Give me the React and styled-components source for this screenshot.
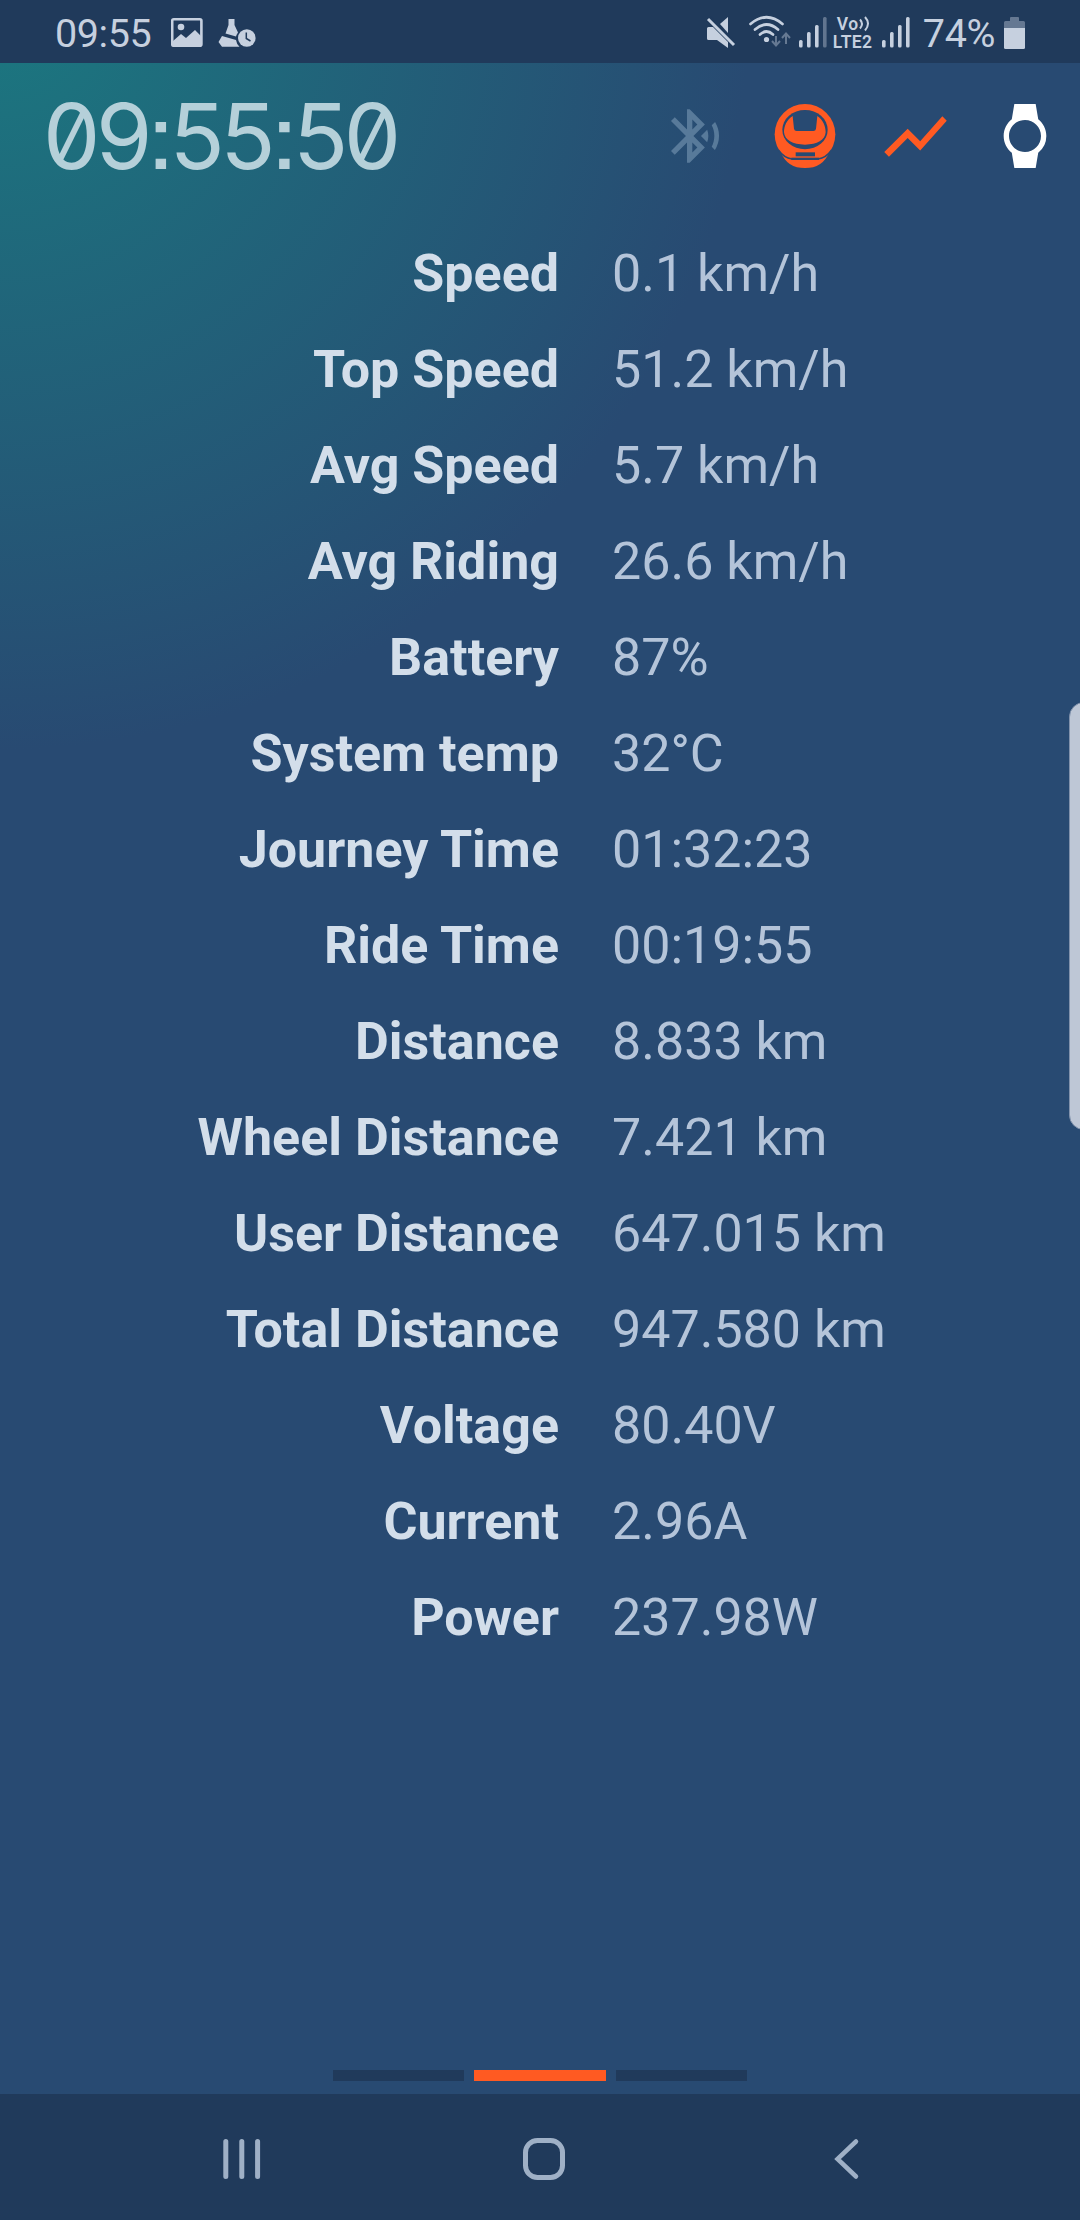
import React from "react";
import styled, { createGlobalStyle } from "styled-components";
import { MdBluetoothAudio, MdShowChart, MdWatch } from "react-icons/md";

const GlobalStyle = createGlobalStyle`
  * {
    box-sizing: border-box;
  }
  body {
    margin: 0;
    background: #284a72;
  }
`;

const Screen = styled.div`
  position: relative;
  display: flex;
  flex-direction: column;
  width: 1080px;
  height: 2220px;
  overflow: hidden;
  font-family: Roboto, sans-serif;
  background: radial-gradient(circle 750px at 0 0, #1b7880 0%, #284a72 100%);
  background-color: #284a72;
`;

const StatusBar = styled.div`
  display: flex;
  justify-content: space-between;
  height: 63px;
  padding: 0 55px;
  background: #203a5b;
  color: #c6d0df;
`;
const StatusGroup = styled.div`
  display: flex;
  align-items: center;
  height: 63px;
  svg {
    display: block;
    flex: none;
  }
`;
const StatusText = styled.span`
  font-size: 39.5px;
  letter-spacing: -0.4px;
  line-height: 40px;
  margin-top: 5px;
  margin-right: ${props => props.$gap}px;
`;
const StatusIcon = styled.svg`
  width: ${props => props.$w}px;
  height: 63px;
  margin-right: ${props => props.$gap || 0}px;
`;
const Volte = styled.div`
  width: 43px;
  margin-right: 6px;
  margin-top: 2px;
  font-size: 17.5px;
  font-weight: 600;
  line-height: 18px;
  letter-spacing: 0.4px;
  white-space: nowrap;
`;
const VolteTop = styled.div`
  display: flex;
  padding-left: 4px;
  height: 18px;
`;

const Header = styled.div`
  display: flex;
  align-items: center;
  height: 146px;
`;
const Clock = styled.div`
  flex: 1;
  padding-left: 43px;
  font-family: Inter, sans-serif;
  font-size: 91px;
  line-height: 100px;
  font-weight: 400;
  font-feature-settings: "zero" 1, "calt" 0, "ss07" 1;
  letter-spacing: -4.5px;
  white-space: nowrap;
  color: #b5d0d9;
`;
const HeaderIcon = styled.div`
  display: flex;
  align-items: center;
  justify-content: center;
  width: 110px;
  height: 110px;
  color: ${props => props.$color};
  svg {
    width: ${props => props.$size || 64}px;
    height: ${props => props.$size || 64}px;
    flex: none;
  }
`;

const Stats = styled.div`
  flex: 1;
  padding-top: 17px;
`;
const Row = styled.div`
  display: grid;
  grid-template-columns: 559px 1fr;
  column-gap: 53px;
  height: 96px;
  align-items: center;
  font-size: 52px;
  line-height: 60px;
`;
const Label = styled.div`
  text-align: right;
  font-weight: 700;
  color: #d3deea;
`;
const Value = styled.div`
  color: #b4c4d9;
`;

const Pager = styled.div`
  display: flex;
  justify-content: center;
  gap: 10px;
  height: 24px;
`;
const Page = styled.div`
  width: 131.5px;
  height: 11px;
  background: ${props => (props.$active ? "#ff5a22" : "#203a5b")};
`;

const NavBar = styled.div`
  display: grid;
  grid-template-columns: repeat(3, 302px);
  justify-items: center;
  align-items: center;
  height: 126px;
  padding: 4px 0 0 91px;
  background: #203a5b;
`;
const NavIcon = styled.svg`
  width: 42px;
  height: 42px;
  fill: none;
  stroke: #9fb0c6;
`;

const EdgeHandle = styled.div`
  position: absolute;
  top: 702px;
  right: -20px;
  width: 31px;
  height: 428px;
  border: 1px solid #8192ac;
  border-radius: 15px;
  background: #bec7d6;
`;

const Signal = ({ weak, gap }) => (
  <StatusIcon $w={28} $gap={gap} viewBox="0 0 28 63" fill="currentColor">
    <rect x="0" y="40" width="3.6" height="7.5" rx="1.5" />
    <rect x="8" y="32" width="3.6" height="15.5" rx="1.5" />
    <rect x="16" y="25" width="3.6" height="22.5" rx="1.5" />
    <rect
      x="24"
      y="17"
      width="3.6"
      height="30.5"
      rx="1.5"
      opacity={weak ? 0.4 : 1}
    />
  </StatusIcon>
);

const Wheel = () => (
  <svg viewBox="397 312 192 192">
    <circle cx="493" cy="403" r="91" fill="#ff5a22" />
    <path d="M421 458Q440 504 493 504Q546 504 565 458Z" fill="#ff5a22" />
    <path
      d="M413 450Q430 474 454 477H532Q556 474 573 450"
      fill="none"
      stroke="#284a72"
      strokeWidth="5"
    />
    <path d="M452 473H535V480H452Z" fill="#284a72" />
    <path d="M465 457H523V469H465Z" fill="#284a72" />
    <ellipse cx="493" cy="389" rx="68" ry="59" fill="#284a72" />
    <path
      d="M456 348C438 360 430 378 430 397C432 420 456 434 493 434C530 434 553 420 555 397C555 378 547 360 530 348L526 386Q525 393 518 393H468Q461 393 460 386Z"
      fill="#ff5a22"
    />
  </svg>
);

const stats = [
  ["Speed", "0.1 km/h"],
  ["Top Speed", "51.2 km/h"],
  ["Avg Speed", "5.7 km/h"],
  ["Avg Riding", "26.6 km/h"],
  ["Battery", "87%"],
  ["System temp", "32°C"],
  ["Journey Time", "01:32:23"],
  ["Ride Time", "00:19:55"],
  ["Distance", "8.833 km"],
  ["Wheel Distance", "7.421 km"],
  ["User Distance", "647.015 km"],
  ["Total Distance", "947.580 km"],
  ["Voltage", "80.40V"],
  ["Current", "2.96A"],
  ["Power", "237.98W"]
];

const App = () => {
  return (
    <Screen>
      <GlobalStyle />
      <StatusBar>
        <StatusGroup>
          <StatusText $gap={20}>09:55</StatusText>
          {/* gallery */}
          <StatusIcon $w={32} $gap={15} viewBox="172 0 32 63">
            <rect
              x="173.2"
              y="19.2"
              width="29.2"
              height="26.6"
              rx="1.5"
              fill="none"
              stroke="currentColor"
              strokeWidth="2.6"
            />
            <circle cx="182" cy="27" r="3.3" fill="currentColor" />
            <path
              d="M174 41L182 34L187 38L196 30L202 36V46H174Z"
              fill="currentColor"
            />
          </StatusIcon>
          {/* shoe with a clock */}
          <StatusIcon $w={38} viewBox="219 0 38 63" fill="currentColor">
            <path d="M229.5 19H235.5V25L239 32.5Q237 35.5 237 36.5L226.5 33.5L229.5 25Z" />
            <path d="M223 36L237 40Q237.5 44 240.5 46.8H223L219.5 42Z" />
            <circle cx="247.8" cy="38" r="8.8" />
            <path
              d="M247.3 32.5V38.5L251.5 41"
              fill="none"
              stroke="#203a5b"
              strokeWidth="1.5"
            />
          </StatusIcon>
        </StatusGroup>
        <StatusGroup>
          {/* muted speaker */}
          <StatusIcon $w={30} $gap={12} viewBox="706 0 30 63">
            <path
              d="M728 17V33L720 24Z"
              fill="currentColor"
            />
            <path
              d="M708.5 18.5L734 44.5"
              stroke="#203a5b"
              strokeWidth="6"
            />
            <path d="M708 19L734 45" stroke="currentColor" strokeWidth="3" />
            <path
              d="M707 28.5Q707 27 708.5 27H713L728 42V48L717 40H708.5Q707 40 707 38.5Z"
              fill="currentColor"
            />
          </StatusIcon>
          {/* wifi with traffic arrows */}
          <StatusIcon $w={43} $gap={8} viewBox="748 0 43 63" fill="none">
            <g stroke="currentColor" strokeWidth="2.7" strokeLinecap="round">
              <path d="M750.5 24Q766.5 10.5 782.5 24" />
              <path d="M755 29.5Q766.5 19.5 778 29.5" />
              <path d="M760 34.5Q766.5 28.5 773 34.5" />
            </g>
            <circle cx="766.5" cy="39.5" r="2.6" fill="currentColor" />
            <g stroke="currentColor" strokeWidth="2" opacity="0.42">
              <path d="M776 36V45M772 41L776 45.5L780 41" />
              <path d="M786 44V34M782 38L786 33.5L790 38" />
            </g>
          </StatusIcon>
          <Signal weak gap={6} />
          <Volte>
            <VolteTop>
              Vo
              <svg width="12" height="18" viewBox="0 0 12 18" fill="none">
                <g stroke="currentColor" strokeWidth="2">
                  <path d="M1 4.5Q5 9 1 13.5" />
                  <path d="M6 2Q12 8.5 6 15.5" />
                </g>
              </svg>
            </VolteTop>
            <div>LTE2</div>
          </Volte>
          <Signal gap={13} />
          <StatusText $gap={9}>74%</StatusText>
          <StatusIcon $w={21} viewBox="1004 0 21 63" fill="currentColor">
            <path
              d="M1005.5 21H1010V18Q1010 17 1011 17H1018Q1019 17 1019 18V21H1023.5Q1025 21 1025 22.5V28H1004V22.5Q1004 21 1005.5 21Z"
              opacity="0.42"
            />
            <path d="M1004 28H1025V47.5Q1025 49 1023.5 49H1005.5Q1004 49 1004 47.5Z" />
          </StatusIcon>
        </StatusGroup>
      </StatusBar>

      <Header>
        <Clock>09:55:50</Clock>
        <HeaderIcon $color="#587a9a">
          <MdBluetoothAudio />
        </HeaderIcon>
        <HeaderIcon $color="#ff5a22">
          <Wheel />
        </HeaderIcon>
        <HeaderIcon $color="#ff5a22" $size={75}>
          <MdShowChart />
        </HeaderIcon>
        <HeaderIcon $color="#ffffff">
          <MdWatch />
        </HeaderIcon>
      </Header>

      <Stats>
        {stats.map(([label, value]) => (
          <Row key={label}>
            <Label>{label}</Label>
            <Value>{value}</Value>
          </Row>
        ))}
      </Stats>

      <Pager>
        <Page />
        <Page $active />
        <Page />
      </Pager>

      <NavBar>
        <NavIcon viewBox="0 0 42 42" strokeWidth="5" strokeLinecap="round">
          <path d="M4.8 3.5V38.5M20.8 3.5V38.5M36.6 3.5V38.5" />
        </NavIcon>
        <NavIcon viewBox="0 0 42 42" strokeWidth="5">
          <rect x="2.5" y="2.5" width="37" height="37" rx="12" />
        </NavIcon>
        <NavIcon viewBox="0 0 42 42" strokeWidth="4.5" strokeLinecap="round">
          <path d="M31 3.5L12.5 21L31 38.5" />
        </NavIcon>
      </NavBar>
      <EdgeHandle />
    </Screen>
  );
};

export default App;
